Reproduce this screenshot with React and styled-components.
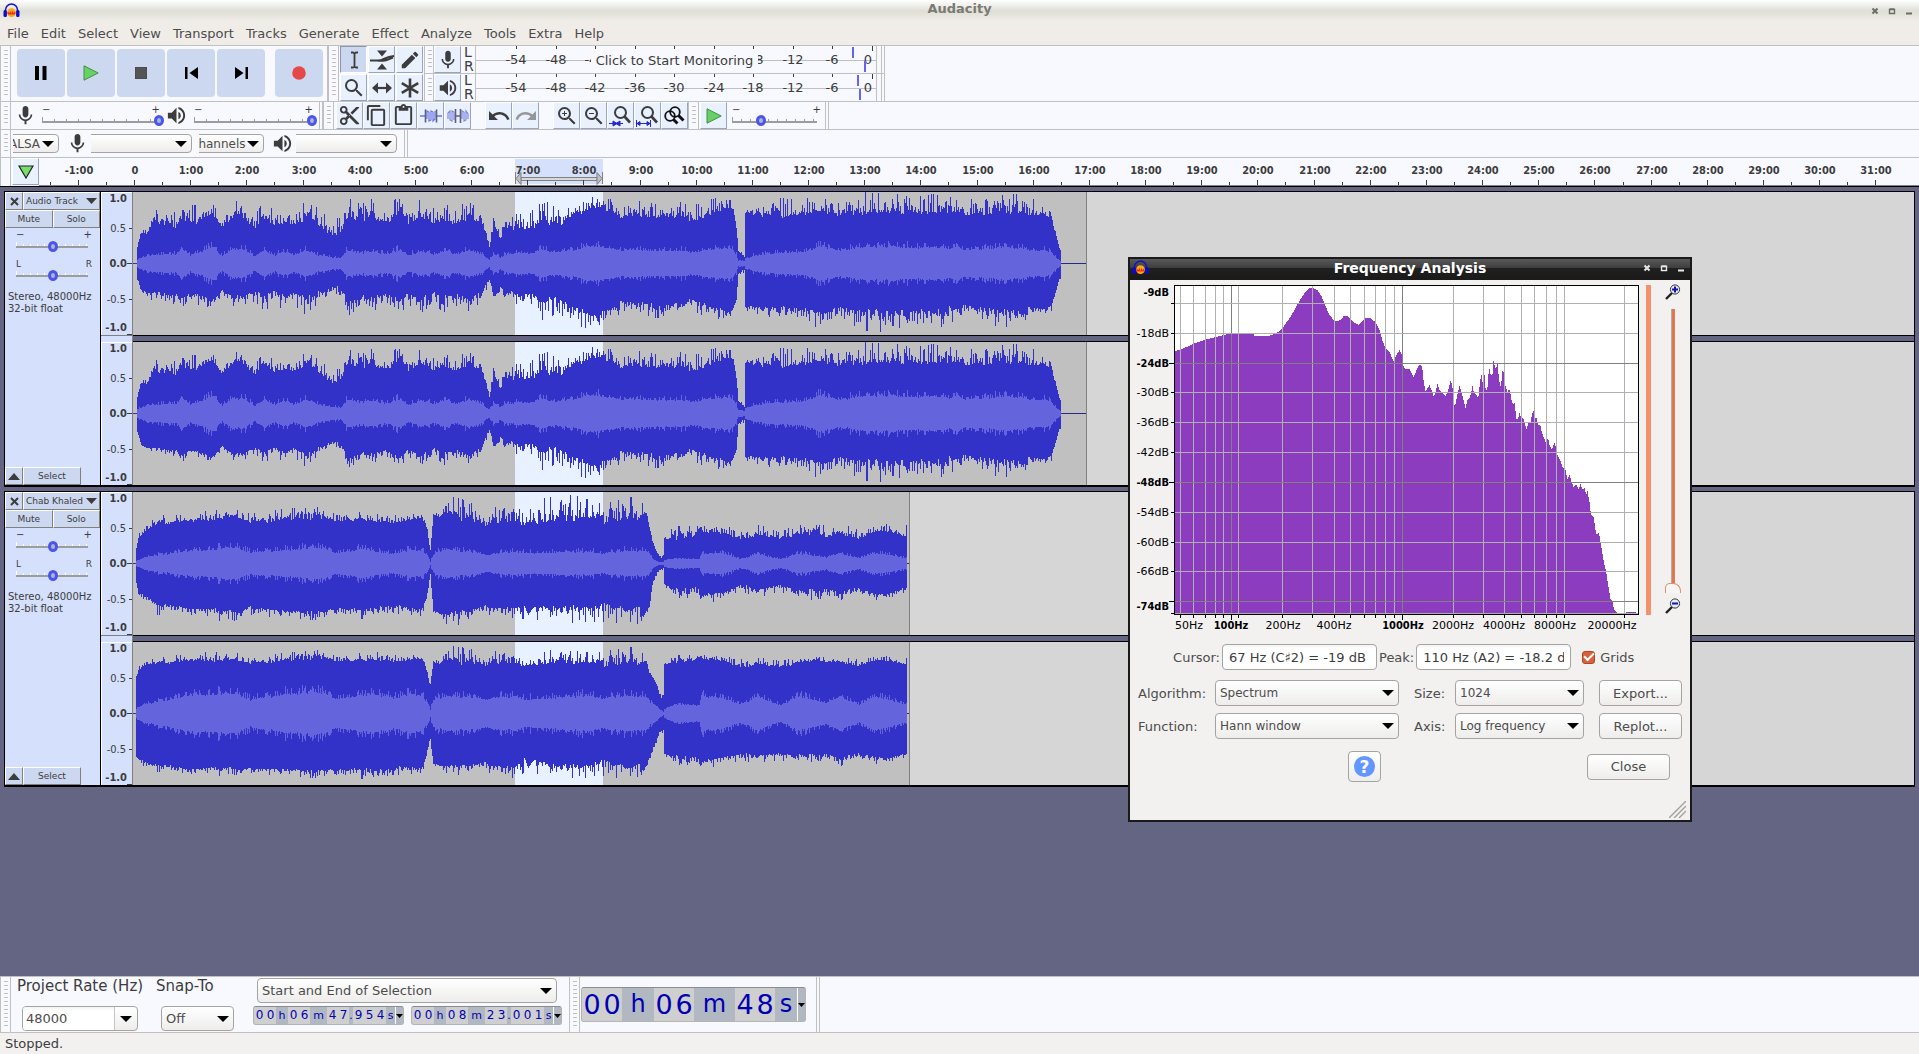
import React from "react";
import styled, { createGlobalStyle, css } from "styled-components";
import {
  MdMic, MdVolumeUp, MdContentCut, MdContentCopy, MdContentPaste, MdUndo, MdRedo,
  MdZoomIn, MdZoomOut, MdSearch, MdEdit,
} from "react-icons/md";

const SANS = `"DejaVu Sans", "Liberation Sans", sans-serif`;
const NARROW = `"DejaVu Sans Condensed", "DejaVu Sans", sans-serif`;
const LINE = "#c0c0c0";
const PANEL = "#f8f8ff";
const INK = "#3c3c3c";

const GlobalStyle = createGlobalStyle`
  * { box-sizing: border-box; }
  body { margin: 0; background: #646582; font-family: ${SANS}; font-size: 13px; color: ${INK}; }
  button, input, select { font: inherit; color: inherit; margin: 0; }
`;

/* ---------- window frame ---------- */

const Window = styled.div`
  position: relative;
  display: flex;
  flex-direction: column;
  min-height: 100vh;
  overflow: hidden;
`;

const TitleBar = styled.header`
  display: grid;
  grid-template-columns: 1fr auto 1fr;
  align-items: center;
  height: 22px;
  padding: 0 3px;
  background: linear-gradient(#ffffff 0, #dedfd6 50%, #f0ede8 100%);
  h1 { margin: 0; padding-bottom: 4px; font-size: 13px; line-height: 16px; color: #7a7a72; }
  svg { display: block; }
`;

const WindowControls = styled.div`
  display: flex;
  justify-content: flex-end;
  gap: 3px;
  button {
    display: block;
    width: 14px;
    height: 14px;
    padding: 0;
    border: 0;
    background: none;
    color: ${(p) => p.$color};
  }
  svg { display: block; }
`;

const MenuBar = styled.nav`
  display: flex;
  align-items: center;
  gap: 12px;
  height: 23px;
  padding: 0 7px;
  background: #f0ede8;
  a { color: #4c4c4c; font-size: 13px; line-height: 20px; text-decoration: none; }
`;

/* ---------- toolbars ---------- */

const DockRow = styled.div`
  display: flex;
  height: ${(p) => p.$h}px;
  border-top: 1px solid ${LINE};
  background: ${PANEL};
`;

const Grip = styled.div`
  flex: none;
  width: ${(p) => p.$w || 11}px;
  border: solid ${LINE};
  border-width: 0 1px;
  padding: 4px 0 4px 3px;
  &::before {
    content: "";
    display: block;
    width: 4px;
    height: 100%;
    background: ${(p) => (p.$plain ? "none" : `repeating-linear-gradient(${LINE} 0 1px, transparent 1px 4px)`)};
  }
`;

const DockEnd = styled.div`
  flex: none;
  width: 4px;
  border: solid ${LINE};
  border-width: 0 1px;
`;

const TransportGroup = styled.div`
  display: flex;
  align-items: flex-start;
  gap: 2px;
  padding: 3px 4px 0 6px;
  border-right: 1px solid ${LINE};
`;

const BigButton = styled.button`
  display: grid;
  place-items: center;
  width: 48px;
  height: 48px;
  padding: 0;
  border: 0;
  border-radius: 4px;
  background: #ccd8f0;
  margin-left: ${(p) => (p.$apart ? 8 : 0)}px;
`;

const ToolGrid = styled.div`
  display: grid;
  grid-template-columns: repeat(3, 27px);
  gap: 1px;
  padding: 0 1px;
`;

const ToolButton = styled.button`
  flex: none;
  display: grid;
  place-items: center;
  width: 27px;
  height: 27px;
  padding: 0;
  border: 1px solid;
  border-color: ${(p) => (p.$on ? "#8c96b0 #ffffff #ffffff #8c96b0" : "#ffffff #9aa4bc #9aa4bc #ffffff")};
  background: ${(p) => (p.$on ? "#ccd8f0" : "#e9f0fe")};
  color: ${(p) => (p.$faded ? "#969696" : INK)};
  svg { display: block; }
`;

const ButtonRun = styled.div`
  display: flex;
  padding-left: ${(p) => p.$pad}px;
`;

const MeterStack = styled.div`
  display: grid;
  grid-template-rows: 27px 27px;
  row-gap: 1px;
  background: linear-gradient(transparent 27px, ${LINE} 27px 28px, transparent 28px);
`;

const MeterRow = styled.div`
  position: relative;
  display: flex;
`;

const Channels = styled.div`
  width: 14px;
  padding-left: 3px;
  font-size: 14px;
  line-height: 14px;
  height: 27px;
  margin-top: -1px;
`;

const MeterSvg = styled.svg`
  display: block;
  font-size: 13px;
  font-family: ${SANS};
`;

const MonitorButton = styled.button`
  position: absolute;
  left: 167px;
  top: 5px;
  height: 19px;
  width: 167px;
  padding: 0;
  border: 0;
  background: ${PANEL};
  font-size: 13px;
  line-height: 19px;
`;

const MixerPart = styled.div`
  display: flex;
  align-items: center;
  padding-left: ${(p) => p.$pad}px;
  gap: ${(p) => p.$gap || 0}px;
  svg { flex: none; display: block; }
`;

const SliderBox = styled.div`
  width: ${(p) => p.$w}px;
  flex: none;
`;

const SliderEnds = styled.div`
  display: flex;
  justify-content: space-between;
  padding: 0 4px;
  font-size: ${(p) => p.$size || 10}px;
  line-height: 10px;
  height: 10px;
`;

const Range = styled.input.attrs({ type: "range" })`
  appearance: none;
  display: block;
  width: 100%;
  height: 12px;
  background:
    linear-gradient(#9c9c9c, #9c9c9c) 4px 6px / calc(100% - 12px) 2px no-repeat,
    linear-gradient(${(p) => p.$tick}, ${(p) => p.$tick}) 4px 2px / 1px 4px no-repeat,
    repeating-linear-gradient(90deg, ${(p) => p.$tick} 0 1px, transparent 1px ${(p) => p.$step}px) 4px 4px / calc(100% - 12px) 2px no-repeat;
  &::-webkit-slider-thumb {
    appearance: none;
    width: 10px;
    height: 11px;
    border: 3px solid #4a55ec;
    border-radius: 50%;
    background: #b4b4c8;
  }
`;

/* ---------- drop-downs ---------- */

const fieldLook = css`
  border: 1px solid #a4a4a2;
  border-radius: 4px;
  background: linear-gradient(#ffffff, #eeedec);
`;

const SelectWrap = styled.span`
  display: grid;
  flex: none;
  overflow: hidden;
  width: ${(p) => p.$w}px;
  height: ${(p) => p.$h}px;
  &::after {
    content: "";
    grid-area: 1 / 1;
    align-self: center;
    justify-self: end;
    margin-right: 5px;
    border: solid transparent;
    border-width: 6px 6px 0;
    border-top-color: #000;
    pointer-events: none;
  }
  select {
    grid-area: 1 / 1;
    appearance: none;
    width: 100%;
    height: 100%;
    padding: 0 0 0 4px;
    font-size: ${(p) => p.$size || 12}px;
    color: #4c4c4c;
    ${fieldLook}
    ${(p) => p.$cut && css`
      width: calc(100% + ${p.$cut}px);
      margin-left: -${p.$cut}px;
      padding: 0;
    `}
  }
`;

const DeviceRow = styled.div`
  display: flex;
  align-items: center;
  padding-left: 2px;
  padding-right: 7px;
  svg { display: block; }
`;

const DeviceIcon = styled.span`
  display: grid;
  place-items: center;
  width: ${(p) => p.$w}px;
  padding-left: ${(p) => (p.$w > 10 ? 5 : 0)}px;
`;

/* ---------- time line ---------- */

const RulerRow = styled.div`
  display: flex;
  height: 30px;
  border-top: 1px solid ${LINE};
  border-bottom: 1px solid #000;
  background: ${PANEL};
  > svg { display: block; flex: 1; min-width: 0; height: 28px; }
`;

const TimeLabel = styled.text`
  font: bold 11px ${NARROW};
  fill: ${INK};
  text-anchor: middle;
`;

/* ---------- tracks ---------- */

const TrackArea = styled.main`
  flex: 1;
  display: flex;
  flex-direction: column;
  gap: 4px;
  padding: 4px 4px 0;
  background: #646582;
`;

const Track = styled.section`
  display: flex;
  height: 296px;
  border: 1px solid #000;
  border-bottom-width: 2px;
`;

const TrackPanel = styled.div`
  flex: none;
  display: flex;
  flex-direction: column;
  width: 96px;
  background: #d4e0fc;
  border-right: 1px solid #000;
`;

const PanelRow = styled.div`
  display: grid;
  grid-template-columns: ${(p) => p.$cols};
  height: 18px;
`;

const PanelButton = styled.button`
  display: flex;
  align-items: center;
  justify-content: ${(p) => (p.$spread ? "space-between" : "center")};
  min-width: 0;
  padding: 0 ${(p) => (p.$spread ? 2 : 0)}px;
  border: solid;
  border-width: 1px;
  border-color: #ffffff #808080 #808080 #ffffff;
  background: #ccd8f0;
  font-size: 9px;
  line-height: 12px;
  white-space: nowrap;
  svg { display: block; flex: none; }
`;

const PanelSlider = styled.div`
  width: 84px;
  margin: 2px 0 5px 7px;
`;

const Format = styled.p`
  margin: 5px 0 auto 3px;
  font-size: 10px;
  line-height: 12px;
  white-space: nowrap;
`;

const ScaleSvg = styled.svg`
  flex: none;
  display: block;
  width: 32px;
  height: 293px;
  background: #d4e0fc;
`;

const ScaleLabel = styled.text`
  font: ${(p) => (p.$bold ? `bold 11px ${NARROW}` : `11px ${NARROW}`)};
  fill: ${INK};
  text-anchor: end;
`;

const Lanes = styled.div`
  flex: 1;
  min-width: 0;
  display: grid;
  grid-template-rows: 143px 143px;
  row-gap: 7px;
  background: linear-gradient(#000 143px, #000 144px, #646582 144px 149px, #000 149px);
  svg { display: block; width: 100%; height: 143px; background: #d6d6d6; }
`;

/* ---------- bottom ---------- */

const SelectionBar = styled.div`
  display: flex;
  height: 57px;
  border-top: 1px solid ${LINE};
  border-bottom: 1px solid ${LINE};
  background: ${PANEL};
`;

const RateGroup = styled.div`
  display: flex;
  flex-direction: column;
  justify-content: space-between;
  width: ${(p) => p.$w}px;
  padding: 0 0 1px 6px;
  label { font-size: 15px; line-height: 18px; white-space: nowrap; }
  > span { margin-left: 5px; }
`;

const Combo = styled.span`
  display: flex;
  width: 116px;
  height: 25px;
  overflow: hidden;
  ${fieldLook}
  input { width: 92px; border: 0; border-right: 1px solid #c4c4c2; padding: 0 3px; background: linear-gradient(#f4f4f4, #fff 4px); font-size: 13px; color: #4c4c4c; }
  button { flex: 1; display: grid; place-items: center; padding: 0; border: 0; background: none; }
`;

const RangeGroup = styled.div`
  display: flex;
  flex-direction: column;
  gap: 3px;
  padding: 1px 7px 0 7px;
  > span { margin-left: 4px; }
`;

const TimePair = styled.div`
  display: flex;
  gap: 7px;
`;

const TimeBox = styled.div`
  display: flex;
  align-items: stretch;
  height: ${(p) => (p.$big ? 35 : 19)}px;
  border: 1px solid #b4b4b4;
  border-top-color: #8c8c8c;
  border-radius: 3px;
  overflow: hidden;
  background: #b2b8c2;
  color: #0000b4;
  button { display: grid; place-items: center; width: 8px; padding: 0; border: 0; border-left: 1px solid #fff; background: none; }
`;

const TimeCell = styled.span`
  display: flex;
  justify-content: space-around;
  align-items: center;
  width: ${(p) => p.$w}px;
  background: ${(p) => (p.$digit ? "#cfcfcf" : "transparent")};
  font-size: ${(p) => (p.$big ? (p.$digit ? 27 : 24) : p.$digit ? 12 : 11)}px;
  line-height: ${(p) => (p.$big ? 33 : 17)}px;
`;

const BigTime = styled.div`
  display: flex;
  align-items: center;
  padding: 0 10px 0 1px;
`;

const StatusBar = styled.footer`
  height: 21px;
  padding-left: 5px;
  background: #f2f1f0;
  font-size: 13px;
  line-height: 22px;
`;

/* ---------- frequency dialog ---------- */

const Dialog = styled.section`
  position: absolute;
  left: 1128px;
  top: 257px;
  display: flex;
  flex-direction: column;
  width: 564px;
  height: 565px;
  border: 2px solid #1a1a1a;
  background: #f2f1f0;
  color: #4c4c4c;
`;

const DialogTitle = styled.header`
  display: grid;
  grid-template-columns: 1fr auto 1fr;
  align-items: center;
  height: 21px;
  padding: 0 2px 3px;
  background: linear-gradient(#5a5a5a, #3c3c3c 45%, #202020 45%, #1a1a1a);
  h2 { margin: 0; font-size: 14px; line-height: 16px; color: #fff; }
  > svg { display: block; }
`;

const PlotRow = styled.div`
  display: flex;
`;

const PlotSvg = styled.svg`
  flex: none;
  display: block;
  width: 510px;
  height: 354px;
`;

const AxisLabel = styled.text`
  font: ${(p) => (p.$bold ? `bold 11px ${NARROW}` : `11px ${SANS}`)};
  fill: #000;
  text-anchor: ${(p) => p.$anchor};
`;

const PanBar = styled.div`
  width: 5px;
  height: 330px;
  margin: 5px 13px 0 6px;
  background: #f4906a;
`;

const ZoomColumn = styled.div`
  display: flex;
  flex-direction: column;
  align-items: center;
  width: 18px;
  padding-top: 4px;
  svg { display: block; }
`;

const ZoomRange = styled.input.attrs({ type: "range" })`
  appearance: none;
  writing-mode: vertical-lr;
  direction: rtl;
  width: 16px;
  height: 284px;
  margin: 9px 0 5px;
  background: linear-gradient(90deg, #b0aca8 1px, #e07850 1px) center / 4px 100% no-repeat;
  &::-webkit-slider-thumb {
    appearance: none;
    width: 16px;
    height: 10px;
    border: 1px solid #e09070;
    border-bottom: 0;
    border-radius: 5px 8px 0 0;
    background: #f8f6f4;
  }
`;

const ReadoutRow = styled.div`
  display: flex;
  align-items: center;
  gap: 2px;
  margin-top: 10px;
  height: 26px;
  input[type="text"] {
    width: 155px;
    height: 26px;
    padding: 0 6px;
    border: 1px solid #a4a4a2;
    border-radius: 4px;
    background: linear-gradient(#f4f4f4, #fff 4px);
    color: ${INK};
  }
  label:first-child { width: 90px; text-align: right; }
  label { white-space: nowrap; }
`;

const GridsToggle = styled.label`
  display: flex;
  align-items: center;
  gap: 5px;
  margin-left: 9px;
  input {
    appearance: none;
    display: grid;
    place-items: center;
    width: 13px;
    height: 13px;
    border-radius: 3px;
    background: #d9603a;
    border: 1px solid #a84a28;
  }
  input:checked::before {
    content: "";
    width: 8px;
    height: 4px;
    border: solid #fff;
    border-width: 0 0 2px 2px;
    transform: rotate(-45deg) translate(1px, -1px);
  }
`;

const OptionGrid = styled.div`
  display: grid;
  grid-template-columns: 77px 199px 41px 144px 83px;
  grid-auto-rows: 26px;
  row-gap: 7px;
  align-items: center;
  margin: 10px 0 0 8px;
`;

const PushButton = styled.button`
  display: grid;
  place-items: center;
  width: ${(p) => p.$w || 83}px;
  height: ${(p) => p.$h || 26}px;
  padding: 0;
  ${fieldLook}
  span {
    display: grid;
    place-items: center;
    width: 21px;
    height: 21px;
    border-radius: 50%;
    background: #6496ff;
    color: #fff;
    font-size: 17px;
    font-weight: bold;
  }
`;

const DialogFooter = styled.div`
  display: flex;
  align-items: center;
  justify-content: space-between;
  margin-top: 12px;
  padding: 0 20px 0 218px;
`;

const ResizeCorner = styled.svg`
  display: block;
  margin: auto 4px 2px auto;
`;

/* ---------- drawings ---------- */

const Logo = () => (
  <svg width="17" height="16" viewBox="0 0 17 16" aria-hidden="true">
    <path d="M2.5 9V7a6 6 0 0 1 12 0v2" fill="none" stroke="#1414c8" strokeWidth="1.6" />
    <rect x="0.5" y="7" width="3.4" height="7" rx="1.5" fill="#0a0ad2" />
    <rect x="13.1" y="7" width="3.4" height="7" rx="1.5" fill="#0a0ad2" />
    <circle cx="8.5" cy="9.6" r="4.4" fill="#f8a818" />
    <path d="M4.2 10l1-1.4 1 2 1-2.8 1.2 3 1.2-3 1 2.8 1-2 1 1.4-1 1.6H5.2z" fill="#f02818" />
  </svg>
);

const FrameIcon = ({ kind }) => (
  <svg width="14" height="14" viewBox="0 0 14 14" stroke="currentColor" fill="none" strokeWidth="2" aria-hidden="true">
    {kind === "close" && <path d="M4.5 4.5l5 5M9.500 4.500l-5 5" />}
    {kind === "max" && <path d="M4.500 5.500h5v4h-5zM4.500 5h5" strokeWidth="1.400" />}
    {kind === "min" && <path d="M4 9.500h6" />}
  </svg>
);

const DownArrow = ({ w = 12, h = 6, color = "#000" }) => (
  <svg width={w} height={h} viewBox="0 0 12 6" preserveAspectRatio="none" aria-hidden="true">
    <path d="M0 0h12L6 6z" fill={color} />
  </svg>
);

const PlayIcon = ({ s = 16 }) => (
  <svg width={s} height={s} viewBox="0 0 16 16" aria-hidden="true">
    <path d="M1 .8L15.200 8 1 15.200z" fill="#64d264" stroke="#4a8c4a" />
  </svg>
);

const transport = {
  Pause: <svg width="14" height="14" viewBox="0 0 14 14"><path d="M1 0h4v14H1zM8.500 0h4v14h-4z" /></svg>,
  Play: <PlayIcon />,
  Stop: <svg width="12" height="12" viewBox="0 0 12 12"><path d="M0 0h12v12H0z" fill="#555" stroke="#444" /></svg>,
  "Skip to Start": <svg width="13" height="12" viewBox="0 0 13 12"><path d="M0 0h2.500v12H0zM13 0v12L4.500 6z" /></svg>,
  "Skip to End": <svg width="13" height="12" viewBox="0 0 13 12"><path d="M10.500 0H13v12h-2.500zM0 0v12l8.500-6z" /></svg>,
  Record: <svg width="14" height="14" viewBox="0 0 14 14"><circle cx="7" cy="7" r="6.800" fill="#e44848" /></svg>,
};

const stroke = { fill: "none", stroke: INK, strokeWidth: 2 };

const tools = [
  ["Selection", <svg width="20" height="20" viewBox="0 0 20 20"><path {...stroke} strokeWidth="1.800" d="M7 2.500h2l1.500 1 1.500-1h2M7 17.500h2l1.500-1 1.500 1h2M10.500 3v14" /></svg>],
  ["Envelope", <svg width="26" height="22" viewBox="0 0 26 22"><path d="M8 1.500h10l-5 6zM8 20.500h10l-5-6z" fill={INK} /><path {...stroke} d="M1 11.500h7c6 1 7-4 17-4.500M8 11.500c6 1 9 0 16-3" /></svg>],
  ["Draw", <MdEdit size={22} />],
  ["Zoom", <MdSearch size={24} />],
  ["Time Shift", <svg width="22" height="14" viewBox="0 0 22 14"><path d="M1 7l6-5.500v11zM21 7l-6-5.500v11z" fill={INK} /><path {...stroke} strokeWidth="2.200" d="M5 7h12" /></svg>],
  ["Multi", <svg width="22" height="22" viewBox="0 0 22 22"><path {...stroke} strokeWidth="2.600" d="M11 1.500v19M2.800 6.200l16.400 9.600M19.200 6.200L2.800 15.800" /></svg>],
];

const WaveGlyph = ({ silence }) => (
  <svg width="22" height="18" viewBox="0 0 22 18" aria-hidden="true">
    {silence ? (
      <>
        <path d="M1 12V6l2-2v9l2 1V4l2 1v8M15 12V4l2 1v9l2-1V4l2 3v5" fill="none" stroke="#8088e0" strokeWidth="1.200" />
        <path d="M8.500 2v14M13.500 2v14M8.500 9h5" stroke="#5c6078" strokeWidth="1.600" />
      </>
    ) : (
      <>
        <path d="M0 9h5M17 9h5" stroke="#6a74e4" strokeWidth="1.600" />
        <path d="M7 12V4l2 1v9l2-1V4l2 1v9l2-2V4" fill="none" stroke="#6a74e4" strokeWidth="1.200" />
        <path d="M5.500 2.500v13M16.500 2.500v13" stroke="#5c6078" strokeWidth="1.600" />
      </>
    )}
  </svg>
);

const ZoomFit = ({ kind }) => (
  <svg width="25" height="24" viewBox="0 0 25 24" aria-hidden="true">
    {kind === "toggle" ? (
      <g fill="none" stroke="#111" strokeWidth="1.800">
        <circle cx="13" cy="8" r="4.800" /><path d="M16.500 11.500l5 5" strokeWidth="3" />
        <circle cx="8" cy="12" r="4.800" /><path d="M11.500 15.500l4 4" strokeWidth="3" />
      </g>
    ) : (
      <>
        <circle cx="12.500" cy="8.500" r="5.500" fill="none" stroke={INK} strokeWidth="2" />
        <path d="M16.500 12.500l5.500 6" stroke={INK} strokeWidth="2.600" />
        {kind === "sel"
          ? <path d="M1 19.500h14M5 17l4 2.500L5 22zM12 17l-4 2.500 4 2.500z" stroke="#2828c8" fill="#2828c8" />
          : <path d="M1.500 16v7M15.500 16v7M2 19.500h13M5 17.500l-3 2 3 2zM12 17.500l3 2-3 2z" stroke="#2828c8" fill="#2828c8" />}
      </>
    )}
  </svg>
);

const Magnifier = ({ plus }) => (
  <svg width="16" height="16" viewBox="0 0 16 16" aria-hidden="true">
    <path d="M1 15l6-6" stroke="#222" strokeWidth="2.400" />
    <circle cx="10" cy="5.500" r="4.600" fill="#e4ecff" stroke="#333" />
    <path d={plus ? "M7 5.500h6M10 2.500v6" : "M7 5.500h6"} stroke="#1414aa" strokeWidth="2" />
  </svg>
);

/* ---------- meters ---------- */

const DB_MARKS = [-54, -48, -42, -36, -30, -24, -18, -12, -6];

// The monitoring prompt lies over the middle of the scale
const COVERED = [-36, -30, -24];

function Meter({ kind, peaks, monitor }) {
  return (
    <MeterRow>
      <Grip $w={10} />
      <ToolButton aria-label={`${kind} meter`}>{kind === "Recording" ? <MdMic size={22} /> : <MdVolumeUp size={22} />}</ToolButton>
      <Channels>L<br />R</Channels>
      <MeterSvg width="406" height="27">
        <path d="M.5 0v27M401.500 0v27" stroke={LINE} />
        <path d="M0 14.500h402" stroke={LINE} />
        {DB_MARKS.map((db, i) => (
          <g key={db}>
            <rect x={41 + Math.round(i * 39.500)} width="1" height="3" fill={INK} />
            {!(monitor && COVERED.includes(db)) && (
              <text x={41 + Math.round(i * 39.500)} y="18" textAnchor="middle" fill={INK}>{db}</text>
            )}
          </g>
        ))}
        <rect x="397" width="1" height="5" fill={INK} />
        <text x="397" y="18" textAnchor="end" fill={INK}>0</text>
        <rect x={peaks[0]} y="1" width="2" height="11" fill="#6464f0" />
        <rect x={peaks[1]} y="15" width="2" height="11" fill="#6464f0" />
      </MeterSvg>
      {monitor && <MonitorButton>Click to Start Monitoring</MonitorButton>}
      <DockEnd />
    </MeterRow>
  );
}

function Slider({ label, width, value, step, ends = ["−", "+"], tick = "#9c9c9c", size }) {
  return (
    <SliderBox $w={width}>
      <SliderEnds $size={size}><span>{ends[0]}</span><span>{ends[1]}</span></SliderEnds>
      <Range aria-label={label} defaultValue={value} $tick={tick} $step={step} />
    </SliderBox>
  );
}

function Dropdown({ label, id, options, ...rest }) {
  return (
    <SelectWrap {...rest}>
      <select id={id} aria-label={id ? undefined : label}>
        {options.map((o) => <option key={o}>{o}</option>)}
      </select>
    </SelectWrap>
  );
}

/* ---------- waveforms ---------- */

function random(seed) {
  let a = seed;
  return () => {
    a = (a + 0x6d2b79f5) | 0;
    let t = Math.imul(a ^ (a >>> 15), 1 | a);
    t = (t + Math.imul(t ^ (t >>> 7), 61 | t)) ^ t;
    return ((t ^ (t >>> 14)) >>> 0) / 4294967296;
  };
}

// Envelope points: [x, top floor, top peak, bottom floor, bottom peak, rms]
const ENVELOPES = {
  a1: [
    [4, .22, .26, .2, .25, .05], [8, .42, .5, .36, .42, .08], [13, .4, .45, .4, .45, .1], [19, .55, .7, .4, .5, .12],
    [42, .52, .8, .42, .55, .13], [49, .65, .85, .5, .68, .22], [57, .55, .78, .42, .5, .12], [79, .68, .82, .5, .66, .24],
    [89, .52, .6, .38, .48, .11], [97, .64, .84, .46, .62, .2], [111, .66, .85, .48, .68, .22], [121, .52, .65, .4, .5, .11],
    [131, .65, .85, .45, .64, .2], [142, .54, .7, .4, .52, .12], [150, .6, .86, .46, .64, .18], [160, .55, .7, .4, .55, .12],
    [172, .64, .84, .48, .68, .19], [185, .54, .74, .4, .54, .12], [196, .4, .6, .32, .44, .09],
    [207, .42, .6, .34, .48, .08], [214, .64, .88, .52, .7, .19], [228, .58, .8, .44, .6, .14], [240, .62, .88, .46, .64, .18],
    [252, .55, .74, .42, .56, .13], [264, .68, .9, .52, .7, .2], [276, .55, .74, .42, .56, .12], [288, .64, .88, .48, .66, .18],
    [300, .55, .75, .4, .55, .13], [312, .62, .88, .46, .66, .18], [322, .54, .76, .42, .56, .13], [335, .64, .84, .48, .64, .19],
    [348, .56, .7, .4, .52, .13],
    [356, .22, .25, .2, .25, .05], [361, .55, .7, .45, .55, .14], [367, .32, .36, .32, .36, .08], [372, .5, .68, .42, .5, .13],
    [384, .48, .72, .4, .58, .15], [396, .48, .66, .42, .58, .14], [408, .6, .88, .5, .75, .2], [422, .5, .75, .48, .68, .16],
    [440, .68, .88, .6, .75, .19], [450, .74, .9, .68, .88, .25], [466, .76, .92, .7, .85, .24], [485, .66, .84, .54, .7, .2],
    [510, .66, .84, .55, .7, .2], [523, .63, .8, .58, .74, .18], [548, .66, .84, .56, .72, .19], [556, .57, .76, .48, .62, .16],
    [575, .68, .86, .6, .74, .2], [590, .74, .92, .62, .76, .21],
    [600, .76, .84, .62, .7, .2], [603, .5, .55, .5, .55, .12], [605, .16, .2, .14, .2, .04],
    [611, .08, .1, .06, .1, .03], [612, .7, .78, .6, .68, .06], [620, .68, .8, .6, .68, .11], [645, .64, .88, .6, .76, .15],
    [670, .68, .86, .62, .72, .17], [686, .72, .96, .68, .9, .25], [710, .7, .88, .62, .74, .2],
    [725, .72, 1, .66, .88, .24], [740, .7, .94, .66, .92, .25], [755, .74, .96, .68, .92, .25], [780, .68, .9, .62, .8, .22],
    [800, .72, .94, .68, .9, .25], [825, .68, .88, .6, .75, .21], [850, .68, .86, .62, .82, .21],
    [875, .72, .94, .66, .86, .24], [890, .72, .94, .64, .78, .22], [905, .68, .84, .62, .72, .19],
    [918, .64, .7, .6, .65, .17], [921, .46, .5, .45, .5, .1], [924, .32, .35, .3, .35, .06], [928, .1, .15, .1, .15, .02],
  ],
  b1: [
    [3, .22, .26, .25, .3, .03], [5, .35, .4, .4, .45, .05], [17, .5, .56, .48, .54, .1], [24, .56, .66, .58, .7, .12],
    [50, .58, .66, .6, .68, .17], [75, .6, .72, .64, .76, .2], [97, .65, .76, .66, .8, .24], [117, .57, .68, .6, .7, .16],
    [150, .62, .74, .66, .75, .2], [190, .64, .78, .68, .78, .23], [204, .58, .66, .6, .7, .14], [230, .62, .72, .66, .76, .22],
    [257, .56, .64, .57, .66, .13], [280, .62, .72, .64, .74, .21], [290, .6, .7, .6, .7, .18], [294, .45, .48, .4, .44, .1],
    [297, .15, .18, .13, .16, .02], [300, .66, .7, .66, .7, .13], [313, .7, .92, .72, .88, .22], [330, .64, .86, .66, .82, .18],
    [355, .56, .72, .6, .7, .13], [380, .58, .84, .6, .74, .17], [400, .6, .86, .62, .76, .15], [440, .62, .92, .6, .8, .17],
    [470, .6, .8, .58, .78, .15], [500, .62, .9, .62, .84, .19], [513, .7, .78, .66, .75, .19], [516, .5, .55, .6, .65, .14],
    [519, .3, .34, .28, .32, .07], [524, .12, .16, .1, .14, .02], [530, .04, .1, .04, .1, .01], [531, .32, .38, .28, .34, .05],
    [542, .36, .5, .36, .46, .07], [566, .38, .5, .34, .46, .06], [568, .44, .56, .44, .54, .14], [590, .42, .55, .4, .5, .15],
    [607, .32, .42, .28, .36, .05], [624, .4, .54, .36, .46, .14], [647, .34, .42, .3, .38, .06], [667, .42, .56, .38, .5, .14],
    [694, .36, .5, .34, .46, .08], [707, .42, .55, .4, .5, .15], [727, .34, .44, .34, .44, .07], [740, .44, .54, .42, .5, .15],
    [773, .4, .52, .36, .46, .08], [774, .15, .2, .15, .2, .05],
  ],
  b2: [
    [3, .52, .56, .6, .64, .06], [5, .6, .64, .62, .66, .09], [10, .66, .7, .66, .72, .12], [24, .7, .77, .72, .8, .17],
    [54, .73, .82, .76, .84, .26], [97, .74, .86, .76, .86, .3], [117, .7, .76, .76, .82, .2], [150, .74, .84, .78, .86, .29],
    [190, .78, .88, .8, .9, .32], [204, .72, .78, .76, .86, .2], [240, .76, .86, .8, .92, .3], [257, .72, .8, .76, .84, .22],
    [280, .76, .84, .76, .86, .3], [290, .74, .78, .74, .8, .25], [294, .55, .58, .5, .55, .14], [297, .36, .4, .33, .36, .05],
    [300, .7, .75, .7, .74, .2], [313, .74, .94, .74, .86, .27], [350, .7, .84, .7, .8, .22], [380, .7, .86, .74, .88, .25],
    [392, .68, .76, .64, .8, .21], [420, .72, .88, .72, .86, .23], [450, .7, .84, .72, .88, .26], [465, .68, .84, .66, .84, .23],
    [500, .7, .9, .74, .9, .26], [513, .72, .8, .72, .8, .25], [516, .56, .6, .62, .68, .17], [522, .44, .48, .4, .45, .12],
    [526, .25, .32, .25, .3, .05], [530, .16, .24, .2, .3, .02], [531, .68, .7, .56, .6, .06], [542, .72, .8, .6, .7, .13],
    [566, .74, .8, .62, .72, .12], [568, .76, .84, .68, .76, .27], [590, .74, .82, .6, .7, .22], [607, .62, .74, .55, .64, .12],
    [624, .7, .78, .58, .68, .25], [647, .64, .72, .56, .64, .12], [667, .72, .78, .58, .68, .25], [694, .72, .78, .56, .64, .14],
    [707, .72, .78, .62, .72, .25], [727, .66, .74, .56, .66, .13], [740, .74, .82, .6, .7, .25], [773, .7, .76, .58, .66, .14],
    [774, .4, .48, .3, .35, .08],
  ],
};
ENVELOPES.a2 = ENVELOPES.a1.map(([x, tf, tp, bf, bp, r]) => {
  const loud = x > 19 && x < 350 ? 1.080 : 1;
  return [x, tf * loud, tp, bf * (x < 350 ? 1.200 : 1), bp * (x < 350 ? 1.060 : 1), r * 1.060];
});

function wavePaths(points, seed) {
  const rnd = random(seed);
  const mid = 71;
  let peak = "";
  let rms = "";
  let k = 0;
  let drift = 0;
  const end = points[points.length - 1][0];
  for (let x = points[0][0]; x < end; x++) {
    while (k < points.length - 2 && points[k + 1][0] <= x) k++;
    const p = points[k];
    const q = points[k + 1];
    const t = q[0] === p[0] ? 0 : Math.max(0, Math.min(1, (x - p[0]) / (q[0] - p[0])));
    const v = p.map((n, i) => n + (q[i] - n) * t);
    drift = drift * 0.7 + (rnd() - 0.5) * 0.5;
    const jump = () => {
      const r = rnd();
      return r > 0.93 ? 1.150 : Math.max(-0.25, r * r + drift * 0.6);
    };
    const up = Math.min(71, Math.round(71 * (v[1] + (v[2] - v[1]) * jump())));
    const down = Math.min(71, Math.round(71 * (v[3] + (v[4] - v[3]) * jump())));
    const s = rnd();
    const r = Math.max(1, Math.round(71 * v[5] * (0.9 + drift * 0.16 + s * s * s * 0.4)));
    peak += `M${x} ${mid - up}h1v${up + down + 1}h-1z`;
    rms += `M${x} ${mid - r}h1v${r * 2 + 1}h-1z`;
  }
  return { peak, rms, end };
}

function Waveform({ name, seed, clipEnd }) {
  const { peak, rms, end } = React.useMemo(() => wavePaths(ENVELOPES[name], seed), [name, seed]);
  return (
    <svg shapeRendering="crispEdges" role="img" aria-label="Waveform">
      <rect width={clipEnd} height="143" fill="#c0c0c0" />
      <rect x="382" width="88" height="143" fill="#e8f1ff" />
      <rect x={clipEnd} width="1" height="143" fill="#808080" />
      <rect y="71" width="4" height="1" fill="#3232c8" />
      <rect x={end} y="71" width={clipEnd - end} height="1" fill="#28288c" />
      <path d={peak} fill="#3232c8" />
      <path d={rms} fill="#6464dc" />
    </svg>
  );
}

function AmplitudeScale() {
  return (
    <ScaleSvg aria-hidden="true">
      {[0, 150].map((y) => (
        <g key={y} transform={`translate(0 ${y})`}>
          <path d="M0 .5h31M.5 0v143" stroke="#fff" />
          <path d="M28 36.500h3M26 71.500h5M28 107.500h3M26 142.500h5" stroke={INK} />
          <ScaleLabel $bold x="26" y="10">1.0</ScaleLabel>
          <ScaleLabel x="25" y="40">0.5</ScaleLabel>
          <ScaleLabel $bold x="26" y="75">0.0</ScaleLabel>
          <ScaleLabel x="25" y="111">-0.5</ScaleLabel>
          <ScaleLabel $bold x="26" y="139">-1.0</ScaleLabel>
        </g>
      ))}
      <path d="M0 143.500h31M31.500 0v293" stroke="#808080" />
    </ScaleSvg>
  );
}

function AudioTrack({ name, lanes, clipEnd }) {
  return (
    <Track aria-label={name}>
      <TrackPanel>
        <PanelRow $cols="18px 1fr">
          <PanelButton aria-label="Close track">
            <svg width="9" height="9" viewBox="0 0 9 9"><path {...stroke} d="M1 1l7 7M8 1L1 8" /></svg>
          </PanelButton>
          <PanelButton $spread><span>{name}</span><DownArrow w={11} h={6} color={INK} /></PanelButton>
        </PanelRow>
        <PanelRow $cols="1fr 1fr">
          <PanelButton>Mute</PanelButton>
          <PanelButton>Solo</PanelButton>
        </PanelRow>
        <PanelSlider><Slider label="Gain" width={84} value={49} step={7} tick="#fff" /></PanelSlider>
        <PanelSlider><Slider label="Pan" width={84} value={49} step={7} tick="#fff" ends={["L", "R"]} size={9} /></PanelSlider>
        <Format>Stereo, 48000Hz<br />32-bit float</Format>
        <PanelRow $cols="18px 58px">
          <PanelButton aria-label="Collapse">
            <svg width="12" height="7" viewBox="0 0 12 7"><path d="M0 7h12L6 0z" fill={INK} /></svg>
          </PanelButton>
          <PanelButton>Select</PanelButton>
        </PanelRow>
      </TrackPanel>
      <AmplitudeScale />
      <Lanes>
        {lanes.map(([key, seed]) => <Waveform key={key} name={key} seed={seed} clipEnd={clipEnd} />)}
      </Lanes>
    </Track>
  );
}

function TimeRuler() {
  const at = (m) => Math.round(95 + m * 56.170);
  const marks = Array.from({ length: 33 }, (_, i) => i - 1);
  return (
    <svg role="img" aria-label="Timeline">
      <rect x="476" y="1" width="88" height="25" fill="#d4e0fc" />
      <g fill={LINE} stroke="#808080">
        <path d="M476.500 14v12M563.500 14v12" />
        <rect x="482" y="19.500" width="76" height="3" fill="#d8d8d8" />
        <path d="M477 20.500l5-6v12zM563 20.500l-5-6v12z" />
      </g>
      <path d="M0 27.500h4000" stroke="#808080" />
      {marks.map((m) => (
        <g key={m}>
          <rect x={at(m)} y="22" width="1" height="5" fill={INK} />
          <rect x={at(m - 0.5)} y="24" width="1" height="3" fill={INK} />
          <TimeLabel x={at(m) + 1} y="16">{m === 0 ? "0" : `${m}:00`}</TimeLabel>
        </g>
      ))}
    </svg>
  );
}

/* ---------- spectrum ---------- */

const SPECTRUM = [
  [0, 303], [35, 290], [55, 280], [95, 267], [135, 257], [155, 252], [236, 252], [237, 256], [283, 256], [305, 248], [322, 233],
  [335, 215], [350, 193], [365, 165], [380, 140], [395, 120], [403, 112], [413, 112], [427, 120], [440, 140], [450, 165],
  [462, 193], [475, 208], [485, 214], [497, 208], [507, 196], [517, 196], [527, 208], [537, 218], [551, 223], [563, 212],
  [573, 202], [585, 202], [600, 215], [613, 238], [623, 275], [633, 296], [643, 305], [655, 333], [663, 315], [673, 299],
  [680, 312], [683, 340], [687, 354], [703, 357], [715, 380], [723, 362], [731, 345], [737, 342], [741, 350], [745, 390],
  [751, 423], [757, 412], [763, 405], [769, 420], [775, 438], [780, 430], [787, 402], [793, 418], [801, 427], [811, 436],
  [817, 425], [823, 405], [827, 388], [832, 412], [836, 465], [841, 462], [847, 430], [853, 406], [859, 425], [865, 450],
  [871, 472], [877, 448], [885, 440], [892, 408], [896, 428], [903, 432], [909, 445], [913, 410], [916, 385], [919, 375],
  [924, 410], [928, 375], [932, 425], [937, 410], [940, 372], [943, 355], [947, 375], [952, 370], [955, 332], [958, 345],
  [962, 355], [967, 342], [972, 390], [977, 412], [982, 363], [986, 365], [990, 405], [997, 425], [1000, 418], [1004, 418],
  [1008, 445], [1013, 463], [1018, 458], [1022, 490], [1025, 512], [1030, 500], [1033, 487], [1037, 500], [1045, 505],
  [1049, 520], [1054, 537], [1060, 515], [1065, 520], [1071, 490], [1075, 481], [1079, 510], [1083, 497], [1088, 525],
  [1095, 522], [1101, 550], [1112, 577], [1115, 565], [1120, 568], [1124, 588], [1130, 597], [1138, 577], [1142, 590],
  [1145, 612], [1155, 628], [1163, 652], [1171, 660], [1177, 686], [1183, 675], [1190, 697], [1195, 710], [1203, 702],
  [1211, 718], [1216, 700], [1222, 717], [1228, 713], [1233, 735], [1237, 722], [1243, 755], [1247, 790], [1255, 800],
  [1262, 845], [1265, 852], [1271, 847], [1277, 880], [1285, 930], [1293, 965], [1300, 1010], [1306, 1047], [1311, 1052],
  [1317, 1077], [1325, 1087], [1350, 1087], [1365, 1084], [1380, 1084], [1384, 1090],
];

function spectrumPath() {
  let d = "M0 327";
  let k = 0;
  for (let x = 0; x < 462; x++) {
    const u = x * 3 + 1;
    while (k < SPECTRUM.length - 2 && SPECTRUM[k + 1][0] <= u) k++;
    const [x0, y0] = SPECTRUM[k];
    const [x1, y1] = SPECTRUM[k + 1];
    const y = y0 + ((y1 - y0) * (u - x0)) / (x1 - x0);
    d += `V${Math.round((y - 107) / 3)}h1`;
  }
  return `${d}V327z`;
}

const GRID_X = [5, 18, 30, 40, 48, [56], 63, 107, 137, 159, 175, 189, 200, 210, 219, [227], 278, 308, 329, 346, 359, 371, 381, 389, 449];
const GRID_Y = [17, 47, [77], 106, 136, 166, [196], 226, 256, 285, [315], 327];
const DB_LABELS = [
  ["-9dB", 16, 1], ["-18dB", 57], ["-24dB", 87, 1], ["-30dB", 116], ["-36dB", 146], ["-42dB", 176],
  ["-48dB", 206, 1], ["-54dB", 236], ["-60dB", 266], ["-66dB", 295], ["-74dB", 330, 1],
];
const HZ_LABELS = [
  ["50Hz", 59], ["100Hz", 101, 1], ["200Hz", 153], ["400Hz", 204], ["1000Hz", 273, 1],
  ["2000Hz", 323], ["4000Hz", 374], ["8000Hz", 425], ["20000Hz", 482],
];

function SpectrumPlot() {
  return (
    <PlotSvg shapeRendering="crispEdges" role="img" aria-label="Spectrum">
      <rect x="44.500" y="5.500" width="464" height="329" fill="#fff" stroke="#000" />
      <g transform="translate(45 6)">
        <path d={spectrumPath()} fill="#8c3cbe" />
        {GRID_X.map((g) => <rect key={`x${g}`} x={+g} width="1" height="328" fill={Array.isArray(g) ? "#808080" : "#b0b0b0"} />)}
        {GRID_Y.map((g) => <rect key={`y${g}`} y={+g} width="463" height="1" fill={Array.isArray(g) ? "#808080" : "#b0b0b0"} />)}
        {GRID_X.map((g) => <rect key={`tx${g}`} x={+g} y="329" width="1" height={Array.isArray(g) ? 5 : 3} fill="#000" />)}
        {GRID_Y.map((g) => <rect key={`ty${g}`} x={Array.isArray(g) ? -6 : -4} y={+g} width={Array.isArray(g) ? 5 : 3} height="1" fill="#000" />)}
      </g>
      {DB_LABELS.map(([t, y, b]) => <AxisLabel key={t} $anchor="end" $bold={b} x="39" y={y}>{t}</AxisLabel>)}
      {HZ_LABELS.map(([t, x, b]) => <AxisLabel key={t} $anchor="middle" $bold={b} x={x} y="349">{t}</AxisLabel>)}
    </PlotSvg>
  );
}

function Controls({ color }) {
  return (
    <WindowControls $color={color}>
      <button aria-label="Close window"><FrameIcon kind="close" /></button>
      <button aria-label="Maximize"><FrameIcon kind="max" /></button>
      <button aria-label="Minimize"><FrameIcon kind="min" /></button>
    </WindowControls>
  );
}

function FrequencyDialog() {
  return (
    <Dialog role="dialog" aria-label="Frequency Analysis">
      <DialogTitle><Logo /><h2>Frequency Analysis</h2><Controls color="#e8e8e8" /></DialogTitle>
      <PlotRow>
        <SpectrumPlot />
        <PanBar />
        <ZoomColumn>
          <Magnifier plus />
          <ZoomRange aria-label="Vertical zoom" defaultValue={0} />
          <Magnifier />
        </ZoomColumn>
      </PlotRow>
      <ReadoutRow>
        <label htmlFor="cursor">Cursor:</label>
        <input id="cursor" type="text" readOnly value="67 Hz (C♯2) = -19 dB" />
        <label htmlFor="peak">Peak:</label>
        <input id="peak" type="text" readOnly value="110 Hz (A2) = -18.2 d" />
        <GridsToggle><input type="checkbox" defaultChecked />Grids</GridsToggle>
      </ReadoutRow>
      <OptionGrid>
        <label htmlFor="algorithm">Algorithm:</label>
        <Dropdown id="algorithm" options={["Spectrum"]} $w={184} $h={26} />
        <label htmlFor="size">Size:</label>
        <Dropdown id="size" options={["1024"]} $w={129} $h={26} />
        <PushButton>Export...</PushButton>
        <label htmlFor="function">Function:</label>
        <Dropdown id="function" options={["Hann window"]} $w={184} $h={26} />
        <label htmlFor="axis">Axis:</label>
        <Dropdown id="axis" options={["Log frequency"]} $w={129} $h={26} />
        <PushButton>Replot...</PushButton>
      </OptionGrid>
      <DialogFooter>
        <PushButton $w={33} $h={31} aria-label="Help"><span>?</span></PushButton>
        <PushButton>Close</PushButton>
      </DialogFooter>
      <ResizeCorner width="17" height="17" viewBox="0 0 17 17" aria-hidden="true">
        <path d="M0 17L17 0M5 17L17 5M10 17l7-7" stroke="#a0a09c" strokeWidth="1.400" />
      </ResizeCorner>
    </Dialog>
  );
}

/* ---------- time fields ---------- */

const FULL = [22, 12, 22, 17, 22, 4, 33, 9];
const SHORT = [40, 32, 40, 41, 40, 22];

function TimeField({ label, parts, widths, big }) {
  return (
    <TimeBox $big={big} role="group" aria-label={label}>
      {parts.map((part, i) => {
        const digit = /\d/.test(part);
        return (
          <TimeCell key={i} $w={widths[i]} $digit={digit} $big={big}>
            {[...part].map((c, j) => <span key={j}>{c}</span>)}
          </TimeCell>
        );
      })}
      <button aria-label={`${label} format`}><DownArrow w={7} h={4} /></button>
    </TimeBox>
  );
}

/* ---------- page ---------- */

const MENUS = ["File", "Edit", "Select", "View", "Transport", "Tracks", "Generate", "Effect", "Analyze", "Tools", "Extra", "Help"];

export default function App() {
  return (
    <Window>
      <GlobalStyle />
      <TitleBar><Logo /><h1>Audacity</h1><Controls color="#6c6c66" /></TitleBar>
      <MenuBar>{MENUS.map((m) => <a key={m} href={`#${m.toLowerCase()}`}>{m}</a>)}</MenuBar>

      <DockRow $h={56}>
        <Grip />
        <TransportGroup>
          {Object.entries(transport).map(([name, icon]) => (
            <BigButton key={name} aria-label={name} $apart={name === "Record"}>{icon}</BigButton>
          ))}
        </TransportGroup>
        <Grip />
        <ToolGrid>
          {tools.map(([name, icon], i) => <ToolButton key={name} aria-label={name} $on={i === 0}>{icon}</ToolButton>)}
        </ToolGrid>
        <MeterStack>
          <Meter kind="Recording" peaks={[377, 389]} monitor />
          <Meter kind="Playback" peaks={[382, 384]} />
        </MeterStack>
      </DockRow>

      <DockRow $h={28}>
        <Grip />
        <MixerPart $pad={3} $gap={1}><MdMic size={23} /><Slider label="Recording volume" width={126} value={100} step={12} /></MixerPart>
        <MixerPart $pad={1} $gap={2}><MdVolumeUp size={23} /><Slider label="Playback volume" width={127} value={100} step={12} /></MixerPart>
        <ButtonRun $pad={2}><DockEnd /></ButtonRun>
        <Grip />
        <ButtonRun $pad={2}>
          <ToolButton aria-label="Cut"><MdContentCut size={23} /></ToolButton>
          <ToolButton aria-label="Copy"><MdContentCopy size={23} /></ToolButton>
          <ToolButton aria-label="Paste"><MdContentPaste size={23} /></ToolButton>
          <ToolButton aria-label="Trim audio"><WaveGlyph /></ToolButton>
          <ToolButton aria-label="Silence audio"><WaveGlyph silence /></ToolButton>
        </ButtonRun>
        <ButtonRun $pad={14}>
          <ToolButton aria-label="Undo"><MdUndo size={24} /></ToolButton>
          <ToolButton aria-label="Redo" $faded><MdRedo size={24} /></ToolButton>
        </ButtonRun>
        <ButtonRun $pad={14}>
          <ToolButton aria-label="Zoom in"><MdZoomIn size={24} /></ToolButton>
          <ToolButton aria-label="Zoom out"><MdZoomOut size={24} /></ToolButton>
          <ToolButton aria-label="Fit selection"><ZoomFit kind="sel" /></ToolButton>
          <ToolButton aria-label="Fit project"><ZoomFit kind="fit" /></ToolButton>
          <ToolButton aria-label="Zoom toggle"><ZoomFit kind="toggle" /></ToolButton>
        </ButtonRun>
        <Grip />
        <ButtonRun $pad={1}><ToolButton aria-label="Play at speed"><PlayIcon /></ToolButton></ButtonRun>
        <MixerPart $pad={1}><Slider label="Playback speed" width={97} value={32} step={9} /></MixerPart>
        <DockEnd />
      </DockRow>

      <DockRow $h={28}>
        <Grip />
        <DeviceRow>
          <Dropdown label="Audio host" options={["ALSA"]} $w={46} $h={19} $cut={5} />
          <DeviceIcon $w={32}><MdMic size={23} /></DeviceIcon>
          <Dropdown label="Recording device" options={[""]} $w={101} $h={19} $cut={5} />
          <DeviceIcon $w={7} />
          <Dropdown label="Recording channels" options={["Channels"]} $w={65} $h={19} $cut={10} />
          <DeviceIcon $w={32}><MdVolumeUp size={23} /></DeviceIcon>
          <Dropdown label="Playback device" options={[""]} $w={101} $h={19} $cut={5} />
        </DeviceRow>
        <DockEnd />
      </DockRow>

      <RulerRow>
        <Grip $plain />
        <ButtonRun $pad={1}><ToolButton aria-label="Pinned play head">
          <svg width="16" height="14" viewBox="0 0 16 14"><path d="M1 1h14L8 13z" fill="#78dc6e" stroke="#222" strokeWidth="1.200" /></svg>
        </ToolButton></ButtonRun>
        <TimeRuler />
      </RulerRow>

      <TrackArea>
        <AudioTrack name="Audio Track" lanes={[["a1", 11], ["a2", 11]]} clipEnd={953} />
        <AudioTrack name="Chab Khaled" lanes={[["b1", 23], ["b2", 23]]} clipEnd={776} />
      </TrackArea>

      <SelectionBar>
        <Grip />
        <RateGroup $w={139}>
          <label htmlFor="rate">Project Rate (Hz)</label>
          <Combo><input id="rate" defaultValue="48000" /><button aria-label="Rates"><DownArrow /></button></Combo>
        </RateGroup>
        <RateGroup $w={96}>
          <label htmlFor="snap">Snap-To</label>
          <Dropdown id="snap" options={["Off"]} $w={73} $h={25} $size={13} />
        </RateGroup>
        <RangeGroup>
          <Dropdown label="Selection mode" options={["Start and End of Selection"]} $w={300} $h={25} $size={13} />
          <TimePair>
            <TimeField label="Selection start" widths={FULL} parts={["00", "h", "06", "m", "47", ".", "954", "s"]} />
            <TimeField label="Selection end" widths={FULL} parts={["00", "h", "08", "m", "23", ".", "001", "s"]} />
          </TimePair>
        </RangeGroup>
        <Grip />
        <BigTime>
          <TimeField big label="Audio position" widths={SHORT} parts={["00", "h", "06", "m", "48", "s"]} />
        </BigTime>
        <DockEnd />
      </SelectionBar>
      <StatusBar>Stopped.</StatusBar>

      <FrequencyDialog />
    </Window>
  );
}
